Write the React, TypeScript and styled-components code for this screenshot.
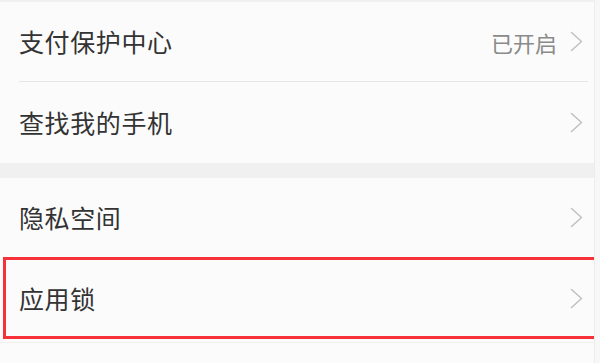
import styled, { createGlobalStyle } from "styled-components";

const GlobalStyle = createGlobalStyle`
  html, body {
    margin: 0;
    padding: 0;
    background: #f7f7f7;
  }
  body {
    font-family: "Noto Sans CJK SC", "Noto Sans", sans-serif;
  }
`;

const Page = styled.div`
  width: 595px;
  height: 363px;
  overflow: hidden;
  background: #fbfbfb;
  border-right: 1px solid #ececec;
  border-top: 2px solid #f0f0f0;
  box-sizing: border-box;
  display: flex;
  flex-direction: column;
`;

const Group = styled.div`
  display: flex;
  flex-direction: column;
  background: #fbfbfb;
`;

const Gap = styled.div`
  height: 15px;
  flex-shrink: 0;
  background: #f0f0f0;
`;

const Row = styled.div<{ $h: number; $highlight?: boolean }>`
  height: ${(p) => p.$h}px;
  flex-shrink: 0;
  box-sizing: border-box;
  display: flex;
  align-items: center;
  padding: 0 11px 0 19px;
  ${(p) =>
    p.$highlight &&
    `
    width: 594px;
    margin-left: 3px;
    border: 3px solid #f7313a;
    padding-left: 13px;
    padding-right: 11px;
  `}
`;

const Label = styled.span`
  flex: 1;
  font-size: 25px;
  letter-spacing: 0.6px;
  color: #333333;
  line-height: 1;
`;

const Value = styled.span`
  font-size: 22px;
  color: #8a8a8a;
  margin-right: 13px;
  line-height: 1;
`;

const Divider = styled.div`
  height: 1px;
  flex-shrink: 0;
  margin: 0 6px 0 19px;
  background: #e6e6e6;
`;

const BottomLine = styled.div`
  height: 1px;
  margin-top: 3px;
  background: #efefef;
`;

const Chevron = () => (
  <svg width="13" height="21" viewBox="0 0 13 21" style={{ flexShrink: 0 }}>
    <polyline
      points="1.5,1.5 11.5,10.5 1.5,19.5"
      fill="none"
      stroke="#c0c0c0"
      strokeWidth="1.5"
      strokeLinecap="round"
      strokeLinejoin="round"
    />
  </svg>
);

export default function App() {
  return (
    <>
      <GlobalStyle />
      <Page>
        <Group>
          <Row $h={79}>
            <Label>支付保护中心</Label>
            <Value>已开启</Value>
            <Chevron />
          </Row>
          <Divider />
          <Row $h={81}>
            <Label>查找我的手机</Label>
            <Chevron />
          </Row>
        </Group>
        <Gap />
        <Group>
          <Row $h={79}>
            <Label>隐私空间</Label>
            <Chevron />
          </Row>
          <Row $h={82} $highlight>
            <Label>应用锁</Label>
            <Chevron />
          </Row>
          <BottomLine />
        </Group>
      </Page>
    </>
  );
}
